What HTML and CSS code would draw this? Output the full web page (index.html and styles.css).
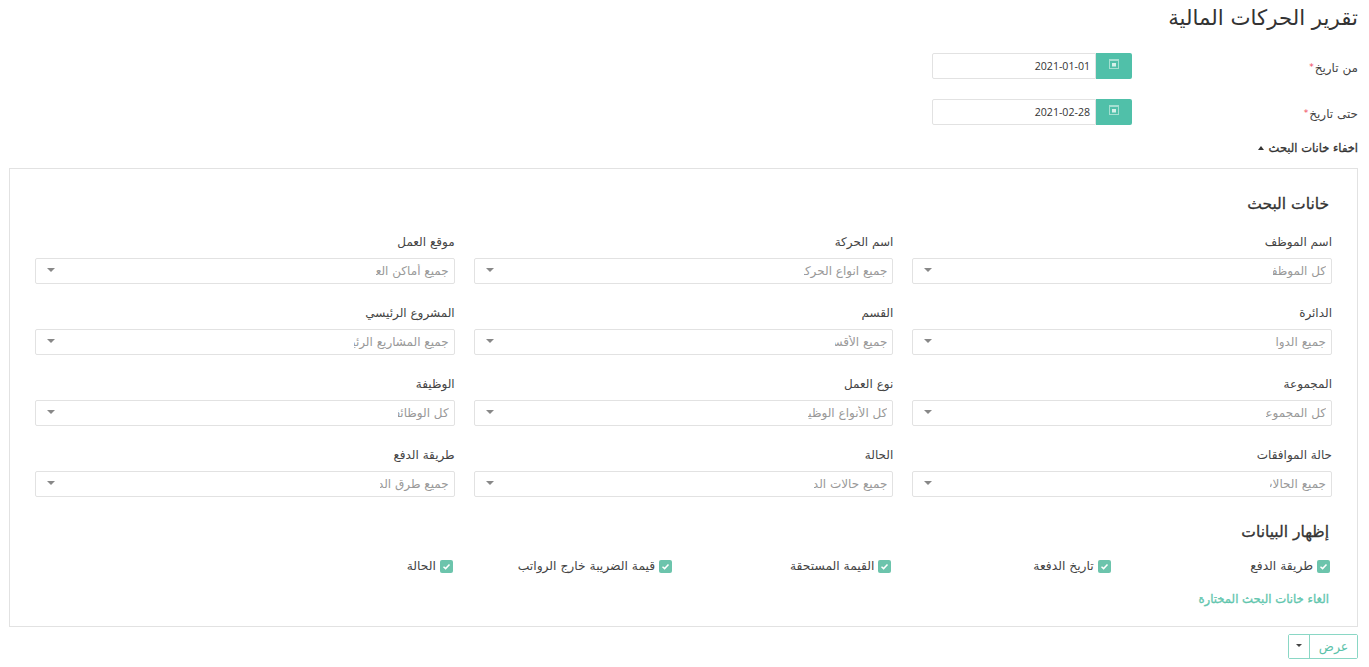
FILE: index.html
```html
<!DOCTYPE html>
<html lang="ar" dir="rtl">
<head>
<meta charset="utf-8">
<title>تقرير الحركات المالية</title>
<link rel="stylesheet" href="styles.css">
</head>
<body>
<h1 class="title">تقرير الحركات المالية</h1>
<div class="date-row">
  <label class="date-label">من تاريخ<span class="req">*</span></label>
  <div class="date-group">
    <div class="date-value">2021-01-01</div>
    <button class="date-btn" type="button"><svg width="10" height="10" viewBox="0 0 10 10"><rect x="0.5" y="0.5" width="9" height="9" fill="none" stroke="#a5dfd1"/><rect x="0" y="0" width="10" height="2" fill="#a5dfd1"/><rect x="3" y="4" width="4" height="3.5" fill="#d5f0e9"/></svg></button>
  </div>
</div>
<div class="date-row">
  <label class="date-label">حتى تاريخ<span class="req">*</span></label>
  <div class="date-group">
    <div class="date-value">2021-02-28</div>
    <button class="date-btn" type="button"><svg width="10" height="10" viewBox="0 0 10 10"><rect x="0.5" y="0.5" width="9" height="9" fill="none" stroke="#a5dfd1"/><rect x="0" y="0" width="10" height="2" fill="#a5dfd1"/><rect x="3" y="4" width="4" height="3.5" fill="#d5f0e9"/></svg></button>
  </div>
</div>
<div class="toggle">اخفاء خانات البحث <span class="caret-up"></span></div>
<section class="panel">
  <h2 class="panel-head first">خانات البحث</h2>
  <div class="fields">
    <div class="field"><label>اسم الموظف</label><div class="select"><span class="ph w53">كل الموظفين</span><span class="caret"></span></div></div>
    <div class="field"><label>اسم الحركة</label><div class="select"><span class="ph w83">جميع انواع الحركات</span><span class="caret"></span></div></div>
    <div class="field"><label>موقع العمل</label><div class="select"><span class="ph w73">جميع أماكن العمل</span><span class="caret"></span></div></div>
    <div class="field"><label>الدائرة</label><div class="select"><span class="ph w51">جميع الدوائر</span><span class="caret"></span></div></div>
    <div class="field"><label>القسم</label><div class="select"><span class="ph w52">جميع الأقسام</span><span class="caret"></span></div></div>
    <div class="field"><label>المشروع الرئيسي</label><div class="select"><span class="ph w95">جميع المشاريع الرئيسية</span><span class="caret"></span></div></div>
    <div class="field"><label>المجموعة</label><div class="select"><span class="ph w60">كل المجموعات</span><span class="caret"></span></div></div>
    <div class="field"><label>نوع العمل</label><div class="select"><span class="ph w79">كل الأنواع الوظيفية</span><span class="caret"></span></div></div>
    <div class="field"><label>الوظيفة</label><div class="select"><span class="ph w51">كل الوظائف</span><span class="caret"></span></div></div>
    <div class="field"><label>حالة الموافقات</label><div class="select"><span class="ph w56">جميع الحالات</span><span class="caret"></span></div></div>
    <div class="field"><label>الحالة</label><div class="select"><span class="ph w73">جميع حالات الدفع</span><span class="caret"></span></div></div>
    <div class="field"><label>طريقة الدفع</label><div class="select"><span class="ph w69">جميع طرق الدفع</span><span class="caret"></span></div></div>
  </div>
  <h2 class="panel-head second">إظهار البيانات</h2>
  <div class="checks">
    <label class="check"><span class="box"><svg width="9" height="9" viewBox="0 0 9 9"><path d="M1.5 4.8 3.6 6.6 7.5 2.6" fill="none" stroke="#fff" stroke-width="1.5"/></svg></span>طريقة الدفع</label>
    <label class="check"><span class="box"><svg width="9" height="9" viewBox="0 0 9 9"><path d="M1.5 4.8 3.6 6.6 7.5 2.6" fill="none" stroke="#fff" stroke-width="1.5"/></svg></span>تاريخ الدفعة</label>
    <label class="check"><span class="box"><svg width="9" height="9" viewBox="0 0 9 9"><path d="M1.5 4.8 3.6 6.6 7.5 2.6" fill="none" stroke="#fff" stroke-width="1.5"/></svg></span>القيمة المستحقة</label>
    <label class="check"><span class="box"><svg width="9" height="9" viewBox="0 0 9 9"><path d="M1.5 4.8 3.6 6.6 7.5 2.6" fill="none" stroke="#fff" stroke-width="1.5"/></svg></span>قيمة الضريبة خارج الرواتب</label>
    <label class="check"><span class="box"><svg width="9" height="9" viewBox="0 0 9 9"><path d="M1.5 4.8 3.6 6.6 7.5 2.6" fill="none" stroke="#fff" stroke-width="1.5"/></svg></span>الحالة</label>
  </div>
  <a class="clear-link">الغاء خانات البحث المختارة</a>
</section>
<div class="actions">
  <div class="split">
    <button class="split-main" type="button">عرض</button>
    <button class="split-caret" type="button"><span class="caret dark"></span></button>
  </div>
</div>
</body>
</html>
```

FILE: styles.css
```css
* { box-sizing: border-box; }
html, body { margin: 0; padding: 0; }
body {
  background: #fff;
  color: #333;
  font-family: "DejaVu Sans", "Noto Sans", sans-serif;
  font-size: 12px;
  padding: 0 11px;
  height: 667px;
  overflow: hidden;
}
.title {
  margin: 0;
  height: 53px;
  padding-top: 2px;
  font-size: 21.3px;
  line-height: 32px;
  font-weight: 400;
  color: #333;
}
.date-row {
  display: flex;
  align-items: center;
  height: 26px;
  margin-bottom: 20px;
}
.date-label {
  width: 226px;
  padding-top: 3px;
  font-size: 12px;
  color: #444;
}
.req {
  color: #ef4a5a;
  font-size: 9px;
  vertical-align: 2px;
  margin-right: 1px;
}
.date-group {
  display: flex;
  flex-direction: row-reverse;
  width: 200px;
  height: 26px;
}
.date-value {
  flex: 1;
  border: 1px solid #e2e2e2;
  border-radius: 2px 0 0 2px;
  font-family: "Open Sans", sans-serif;
  font-size: 10.6px;
  line-height: 24px;
  direction: ltr;
  text-align: right;
  padding-right: 5px;
  color: #333;
}
.date-btn {
  width: 36px;
  border: 0;
  padding: 0 0 5px;
  background: #50c0a9;
  border-radius: 0 2px 2px 0;
  display: flex;
  align-items: center;
  justify-content: center;
}
.toggle {
  height: 31px;
  margin-top: -8px;
  font-size: 11.5px;
  -webkit-text-stroke: 0.3px #333;
  line-height: 22px;
  color: #333;
}
.caret-up {
  display: inline-block;
  width: 0;
  height: 0;
  margin-right: 1px;
  vertical-align: 2px;
  border-left: 3.5px solid transparent;
  border-right: 3.5px solid transparent;
  border-bottom: 4px solid #333;
}
.panel {
  margin-left: -2px;
  height: 459px;
  border: 1px solid #e2e2e2;
  padding: 0 25px;
}
.panel-head {
  margin: 0;
  font-size: 15.5px;
  -webkit-text-stroke: 0.3px #333;
  line-height: 22px;
  font-weight: 400;
  color: #333;
  padding-right: 3px;
}
.panel-head.first { margin-top: 24px; height: 39px; }
.panel-head.second { margin-top: 24px; height: 36px; }
.fields {
  display: grid;
  grid-template-columns: repeat(3, 1fr);
  column-gap: 19px;
  row-gap: 19px;
}
.field label {
  display: block;
  height: 26px;
  line-height: 20px;
  font-size: 12px;
  color: #444;
}
.select {
  display: flex;
  align-items: center;
  justify-content: space-between;
  height: 26px;
  border: 1px solid #e2e2e2;
  border-radius: 2px;
  padding: 0 5px 0 11px;
}
.ph {
  display: block;
  overflow: hidden;
  white-space: nowrap;
  font-size: 12px;
  color: #999;
}
.w51 { width: 51px; }
.w52 { width: 52px; }
.w53 { width: 53px; }
.w56 { width: 56px; }
.w60 { width: 60px; }
.w69 { width: 69px; }
.w73 { width: 73px; }
.w79 { width: 79px; }
.w83 { width: 83px; }
.w95 { width: 95px; }
.caret {
  display: block;
  width: 0;
  height: 0;
  border-left: 4px solid transparent;
  border-right: 4px solid transparent;
  border-top: 4px solid #888;
  margin-top: -2px;
}
.caret.dark {
  border-left-width: 3px;
  border-right-width: 3px;
  border-top: 3px solid #444;
  margin: 0 0 3px;
}
.checks {
  display: grid;
  grid-template-columns: repeat(6, 219.3px);
  height: 33px;
  padding-right: 2px;
}
.check {
  display: flex;
  align-items: center;
  gap: 4px;
  height: 18px;
  font-size: 12.3px;
  color: #444;
}
.box {
  flex: none;
  width: 13px;
  height: 13px;
  border-radius: 2px;
  background: #6cc4ac;
  display: flex;
  align-items: center;
  justify-content: center;
}
.clear-link {
  display: block;
  font-size: 11.7px;
  -webkit-text-stroke: 0.3px #62c6ae;
  line-height: 18px;
  color: #62c6ae;
  padding-right: 3px;
}
.actions { margin-top: 7px; display: flex; }
.split {
  display: flex;
  width: 70px;
  height: 25px;
  border: 1px solid #8ad7c5;
  border-radius: 2px;
}
.split-main, .split-caret {
  background: #fff;
  border: 0;
  padding: 0;
  font-family: inherit;
}
.split-main { flex: 1; font-size: 12.5px; color: #5cc2aa; }
.split-caret {
  width: 21px;
  border-right: 1px solid #8ad7c5;
  display: flex;
  align-items: center;
  justify-content: center;
}
```
